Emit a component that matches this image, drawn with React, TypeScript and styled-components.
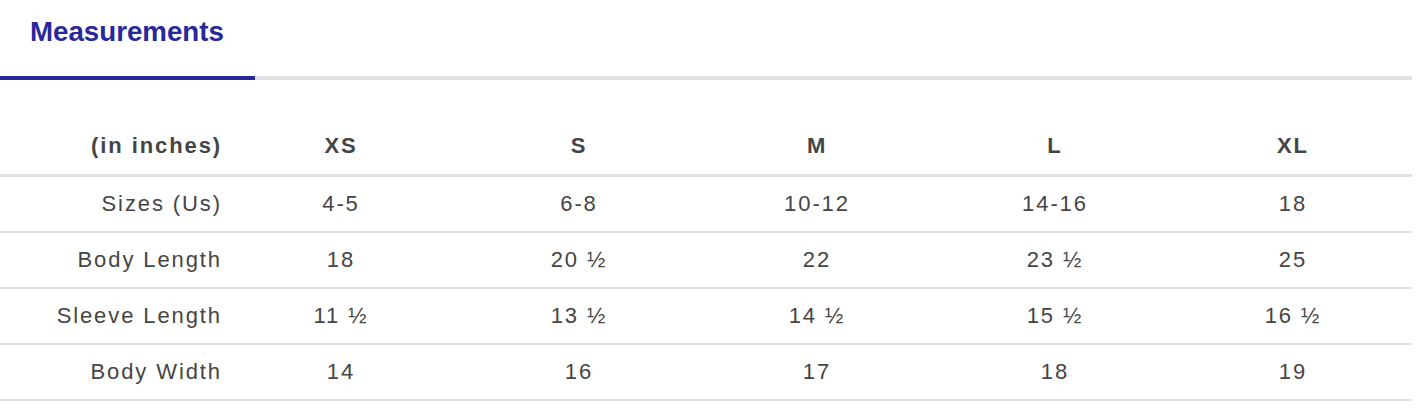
import React from "react";
import styled, { createGlobalStyle } from "styled-components";

const GlobalStyle = createGlobalStyle`
  html, body { margin: 0; padding: 0; background: #ffffff; }
  body { font-family: "Liberation Sans", Arial, Helvetica, sans-serif; }
`;

const Page = styled.div`
  width: 1412px;
  background: #ffffff;
`;

const TabBar = styled.div`
  display: flex;
  border-bottom: 4px solid #e0e0e5;
`;

const Tab = styled.div<{ $active?: boolean }>`
  box-sizing: border-box;
  width: 255px;
  padding: 16px 0 28px 30px;
  margin-bottom: -4px;
  font-size: 27.7px;
  line-height: 32px;
  font-weight: 700;
  color: #29289b;
  border-bottom: 4px solid ${(p) => (p.$active ? "#29289b" : "transparent")};
`;

const Table = styled.table`
  width: 1412px;
  margin-top: 38px;
  border-collapse: collapse;
  table-layout: fixed;
  color: #454545;
  font-size: 22px;
  letter-spacing: 1.9px;
`;

const HeadCell = styled.th<{ $label?: boolean }>`
  height: 56px;
  padding: 0;
  font-weight: 700;
  text-align: ${(p) => (p.$label ? "right" : "center")};
  width: ${(p) => (p.$label ? "222px" : "auto")};
  border-bottom: 3px solid #e0e0e5;
`;

const Cell = styled.td<{ $label?: boolean }>`
  height: 54px;
  padding: 0;
  text-align: ${(p) => (p.$label ? "right" : "center")};
  border-bottom: 2px solid #e0e0e5;
`;

const sizes = ["XS", "S", "M", "L", "XL"];
const rows: { label: string; values: string[] }[] = [
  { label: "Sizes (Us)", values: ["4-5", "6-8", "10-12", "14-16", "18"] },
  { label: "Body Length", values: ["18", "20 ½", "22", "23 ½", "25"] },
  { label: "Sleeve Length", values: ["11 ½", "13 ½", "14 ½", "15 ½", "16 ½"] },
  { label: "Body Width", values: ["14", "16", "17", "18", "19"] },
];

export default function App() {
  return (
    <Page>
      <GlobalStyle />
      <TabBar>
        <Tab $active>Measurements</Tab>
      </TabBar>
      <Table>
        <thead>
          <tr>
            <HeadCell $label>(in inches)</HeadCell>
            {sizes.map((s) => (
              <HeadCell key={s}>{s}</HeadCell>
            ))}
          </tr>
        </thead>
        <tbody>
          {rows.map((r) => (
            <tr key={r.label}>
              <Cell $label>{r.label}</Cell>
              {r.values.map((v, i) => (
                <Cell key={i}>{v}</Cell>
              ))}
            </tr>
          ))}
        </tbody>
      </Table>
    </Page>
  );
}
